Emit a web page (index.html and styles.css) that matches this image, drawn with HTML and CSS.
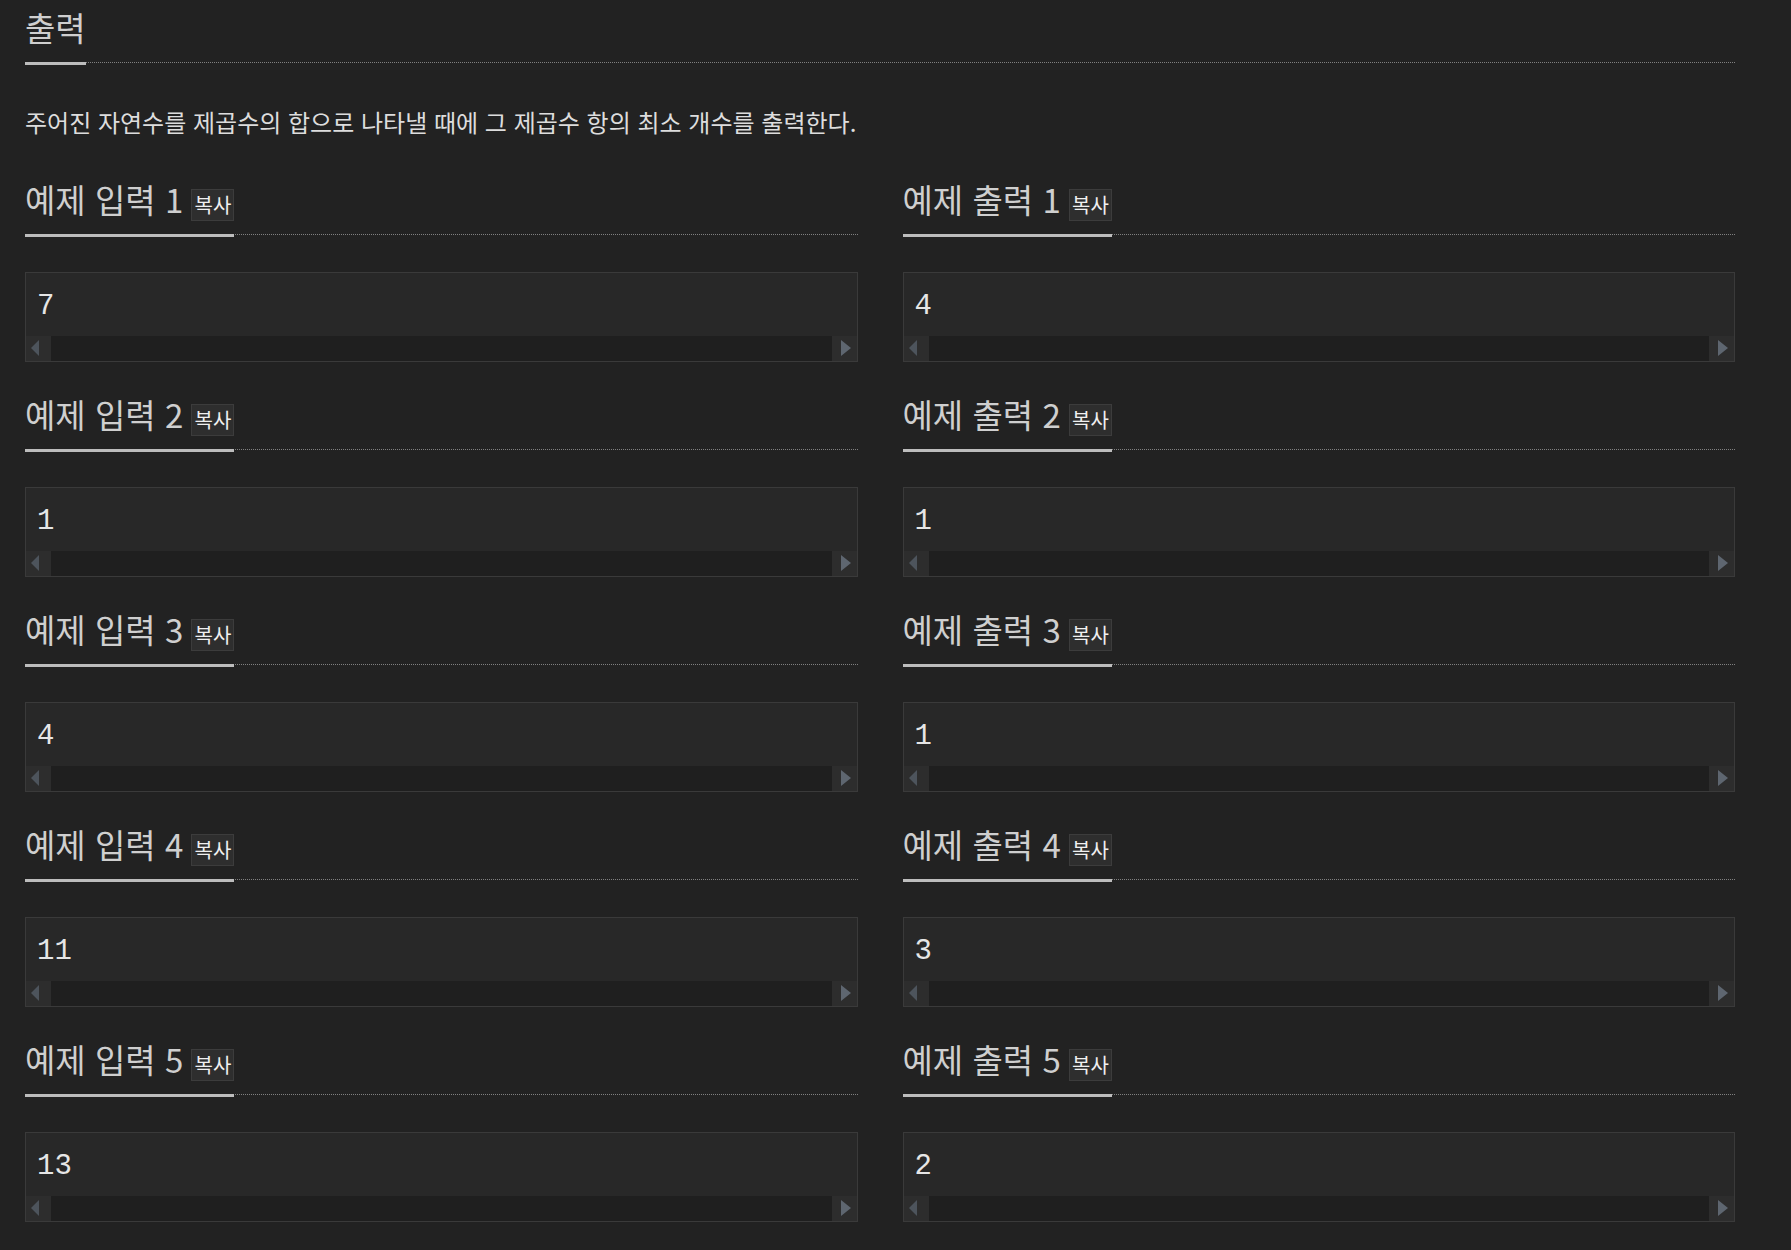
FILE: index.html
```html
<!DOCTYPE html>
<html lang="ko">
<head>
<meta charset="utf-8">
<title>출력</title>
<link rel="stylesheet" href="styles.css">
</head>
<body>
<main class="page">
  <section class="problem-section">
    <h2 class="headline"><span class="headline-text">출력</span></h2>
    <p class="desc">주어진 자연수를 제곱수의 합으로 나타낼 때에 그 제곱수 항의 최소 개수를 출력한다.</p>
  </section>
  <div class="samples">
    <section class="sample">
      <h2 class="headline"><span class="headline-text">예제 입력 1 <span class="copy">복사</span></span></h2>
      <div class="sample-box">
        <pre class="sample-data">7</pre>
        <div class="hscroll"><span class="sb-btn"><svg width="25" height="25" viewBox="0 0 25 25"><polygon class="tri-off" points="13,4 13,20 5,12"/></svg></span><span class="sb-track"></span><span class="sb-btn"><svg width="25" height="25" viewBox="0 0 25 25"><polygon class="tri-on" points="9,4 9,20 19,12"/></svg></span></div>
      </div>
    </section>
    <section class="sample">
      <h2 class="headline"><span class="headline-text">예제 출력 1 <span class="copy">복사</span></span></h2>
      <div class="sample-box">
        <pre class="sample-data">4</pre>
        <div class="hscroll"><span class="sb-btn"><svg width="25" height="25" viewBox="0 0 25 25"><polygon class="tri-off" points="13,4 13,20 5,12"/></svg></span><span class="sb-track"></span><span class="sb-btn"><svg width="25" height="25" viewBox="0 0 25 25"><polygon class="tri-on" points="9,4 9,20 19,12"/></svg></span></div>
      </div>
    </section>
    <section class="sample">
      <h2 class="headline"><span class="headline-text">예제 입력 2 <span class="copy">복사</span></span></h2>
      <div class="sample-box">
        <pre class="sample-data">1</pre>
        <div class="hscroll"><span class="sb-btn"><svg width="25" height="25" viewBox="0 0 25 25"><polygon class="tri-off" points="13,4 13,20 5,12"/></svg></span><span class="sb-track"></span><span class="sb-btn"><svg width="25" height="25" viewBox="0 0 25 25"><polygon class="tri-on" points="9,4 9,20 19,12"/></svg></span></div>
      </div>
    </section>
    <section class="sample">
      <h2 class="headline"><span class="headline-text">예제 출력 2 <span class="copy">복사</span></span></h2>
      <div class="sample-box">
        <pre class="sample-data">1</pre>
        <div class="hscroll"><span class="sb-btn"><svg width="25" height="25" viewBox="0 0 25 25"><polygon class="tri-off" points="13,4 13,20 5,12"/></svg></span><span class="sb-track"></span><span class="sb-btn"><svg width="25" height="25" viewBox="0 0 25 25"><polygon class="tri-on" points="9,4 9,20 19,12"/></svg></span></div>
      </div>
    </section>
    <section class="sample">
      <h2 class="headline"><span class="headline-text">예제 입력 3 <span class="copy">복사</span></span></h2>
      <div class="sample-box">
        <pre class="sample-data">4</pre>
        <div class="hscroll"><span class="sb-btn"><svg width="25" height="25" viewBox="0 0 25 25"><polygon class="tri-off" points="13,4 13,20 5,12"/></svg></span><span class="sb-track"></span><span class="sb-btn"><svg width="25" height="25" viewBox="0 0 25 25"><polygon class="tri-on" points="9,4 9,20 19,12"/></svg></span></div>
      </div>
    </section>
    <section class="sample">
      <h2 class="headline"><span class="headline-text">예제 출력 3 <span class="copy">복사</span></span></h2>
      <div class="sample-box">
        <pre class="sample-data">1</pre>
        <div class="hscroll"><span class="sb-btn"><svg width="25" height="25" viewBox="0 0 25 25"><polygon class="tri-off" points="13,4 13,20 5,12"/></svg></span><span class="sb-track"></span><span class="sb-btn"><svg width="25" height="25" viewBox="0 0 25 25"><polygon class="tri-on" points="9,4 9,20 19,12"/></svg></span></div>
      </div>
    </section>
    <section class="sample">
      <h2 class="headline"><span class="headline-text">예제 입력 4 <span class="copy">복사</span></span></h2>
      <div class="sample-box">
        <pre class="sample-data">11</pre>
        <div class="hscroll"><span class="sb-btn"><svg width="25" height="25" viewBox="0 0 25 25"><polygon class="tri-off" points="13,4 13,20 5,12"/></svg></span><span class="sb-track"></span><span class="sb-btn"><svg width="25" height="25" viewBox="0 0 25 25"><polygon class="tri-on" points="9,4 9,20 19,12"/></svg></span></div>
      </div>
    </section>
    <section class="sample">
      <h2 class="headline"><span class="headline-text">예제 출력 4 <span class="copy">복사</span></span></h2>
      <div class="sample-box">
        <pre class="sample-data">3</pre>
        <div class="hscroll"><span class="sb-btn"><svg width="25" height="25" viewBox="0 0 25 25"><polygon class="tri-off" points="13,4 13,20 5,12"/></svg></span><span class="sb-track"></span><span class="sb-btn"><svg width="25" height="25" viewBox="0 0 25 25"><polygon class="tri-on" points="9,4 9,20 19,12"/></svg></span></div>
      </div>
    </section>
    <section class="sample">
      <h2 class="headline"><span class="headline-text">예제 입력 5 <span class="copy">복사</span></span></h2>
      <div class="sample-box">
        <pre class="sample-data">13</pre>
        <div class="hscroll"><span class="sb-btn"><svg width="25" height="25" viewBox="0 0 25 25"><polygon class="tri-off" points="13,4 13,20 5,12"/></svg></span><span class="sb-track"></span><span class="sb-btn"><svg width="25" height="25" viewBox="0 0 25 25"><polygon class="tri-on" points="9,4 9,20 19,12"/></svg></span></div>
      </div>
    </section>
    <section class="sample">
      <h2 class="headline"><span class="headline-text">예제 출력 5 <span class="copy">복사</span></span></h2>
      <div class="sample-box">
        <pre class="sample-data">2</pre>
        <div class="hscroll"><span class="sb-btn"><svg width="25" height="25" viewBox="0 0 25 25"><polygon class="tri-off" points="13,4 13,20 5,12"/></svg></span><span class="sb-track"></span><span class="sb-btn"><svg width="25" height="25" viewBox="0 0 25 25"><polygon class="tri-on" points="9,4 9,20 19,12"/></svg></span></div>
      </div>
    </section>
  </div>
</main>
</body>
</html>
```
FILE: styles.css
```css
* { box-sizing: border-box; }
html, body { margin: 0; background: #222222; }
body {
  font-family: "Noto Sans CJK KR", "Noto Sans", sans-serif;
  color: #cccccc;
}
.page {
  width: 1791px;
  padding: 7px 56px 0 25px;
}
.headline {
  margin: 0;
  display: flex;
  font-size: 33px;
  line-height: 40px;
  font-weight: 400;
  color: #cfcfcf;
  border-bottom: 1px dotted #808080;
}
.headline-text {
  white-space: pre;
  padding-bottom: 15px;
  border-bottom: 3px solid #bdbdbd;
  margin-bottom: -3px;
}
.copy {
  display: inline-block;
  margin-left: -1px;
  margin-bottom: -3px;
  padding: 0 2px;
  font-size: 20px;
  line-height: 30px;
  color: #f0f0f0;
  background: #2e2e2e;
  border: 1px solid #3c3c3c;
}
.desc {
  margin: 43px 0 0;
  font-size: 24px;
  line-height: 32px;
  color: #dddddd;
}
.samples {
  margin-top: 41px;
  display: grid;
  grid-template-columns: 1fr 1fr;
  column-gap: 45px;
  row-gap: 32px;
}
.sample-box {
  margin-top: 37px;
  border: 1px solid #3a3a3a;
  background: #282828;
}
.sample-data {
  margin: 0;
  height: 63px;
  padding: 4px 11px 0;
  font-family: "Liberation Mono", monospace;
  font-size: 29px;
  line-height: 59px;
  color: #e6e6e6;
}
.hscroll {
  display: flex;
  height: 25px;
  background: #1f1f1f;
}
.sb-btn {
  display: block;
  width: 25px;
  height: 25px;
  background: #2d2d2d;
}
.sb-btn svg { display: block; }
.sb-track { flex: 1; }
.tri-off { fill: #4d545c; }
.tri-on { fill: #5e6670; }
```
